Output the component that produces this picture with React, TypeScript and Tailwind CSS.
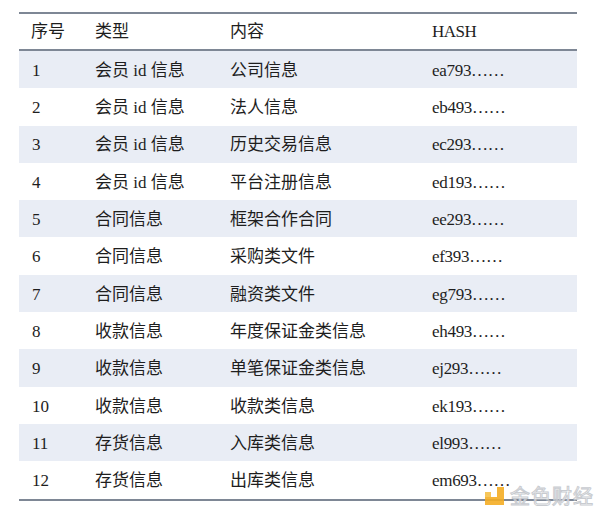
const rows = [
  ["1", "会员 id 信息", "公司信息", "ea793……"],
  ["2", "会员 id 信息", "法人信息", "eb493……"],
  ["3", "会员 id 信息", "历史交易信息", "ec293……"],
  ["4", "会员 id 信息", "平台注册信息", "ed193……"],
  ["5", "合同信息", "框架合作合同", "ee293……"],
  ["6", "合同信息", "采购类文件", "ef393……"],
  ["7", "合同信息", "融资类文件", "eg793……"],
  ["8", "收款信息", "年度保证金类信息", "eh493……"],
  ["9", "收款信息", "单笔保证金类信息", "ej293……"],
  ["10", "收款信息", "收款类信息", "ek193……"],
  ["11", "存货信息", "入库类信息", "el993……"],
  ["12", "存货信息", "出库类信息", "em693……"],
];

const font = "font-['Liberation_Serif','Noto_Sans_CJK_SC',serif]";

export default function App() {
  return (
    <div className={`relative w-[600px] h-[519px] bg-white text-[#1e1e1e] text-[17px] ${font}`}>
      <div className="pt-[12px] pl-[19px] w-[577px]">
        <div className="border-t-2 border-b-2 border-[#7e8795]">
          <div className="grid grid-cols-[64px_135px_202px_1fr] h-[37px] items-center border-b-2 border-[#7e8795]">
            <div className="pl-[12px]">序号</div>
            <div className="pl-[12px]">类型</div>
            <div className="pl-[12px]">内容</div>
            <div className="pl-[12px] tracking-[-0.5px]">HASH</div>
          </div>
          {rows.map((r, i) => (
            <div
              key={r[0]}
              className={`grid grid-cols-[64px_135px_202px_1fr] h-[37.3px] items-center pt-[2px] ${
                i % 2 === 0 ? "bg-[#e9edf5]" : "bg-white"
              }`}
            >
              <div className="pl-[13px]">{r[0]}</div>
              <div className="pl-[12px]">{r[1]}</div>
              <div className="pl-[12px]">{r[2]}</div>
              <div className="pl-[12px] tracking-[-0.3px]">{r[3]}</div>
            </div>
          ))}
        </div>
      </div>

      {/* watermark */}
      <div className="absolute left-[484px] top-[486px] flex items-center gap-[5px] opacity-90">
        <svg width="21" height="18" viewBox="0 0 21 18">
          <rect x="13" y="0" width="7" height="18" fill="#f4ad25" />
          <rect x="1" y="10" width="19" height="8" fill="#f4ad25" />
          <rect x="1" y="5" width="6" height="5" fill="#f6c04a" />
        </svg>
        <span
          className="text-[20px] leading-none text-white font-['Noto_Sans_CJK_SC',sans-serif] tracking-[1px]"
          style={{ WebkitTextStroke: "1px #c3c6cb" }}
        >
          金色财经
        </span>
      </div>
    </div>
  );
}
